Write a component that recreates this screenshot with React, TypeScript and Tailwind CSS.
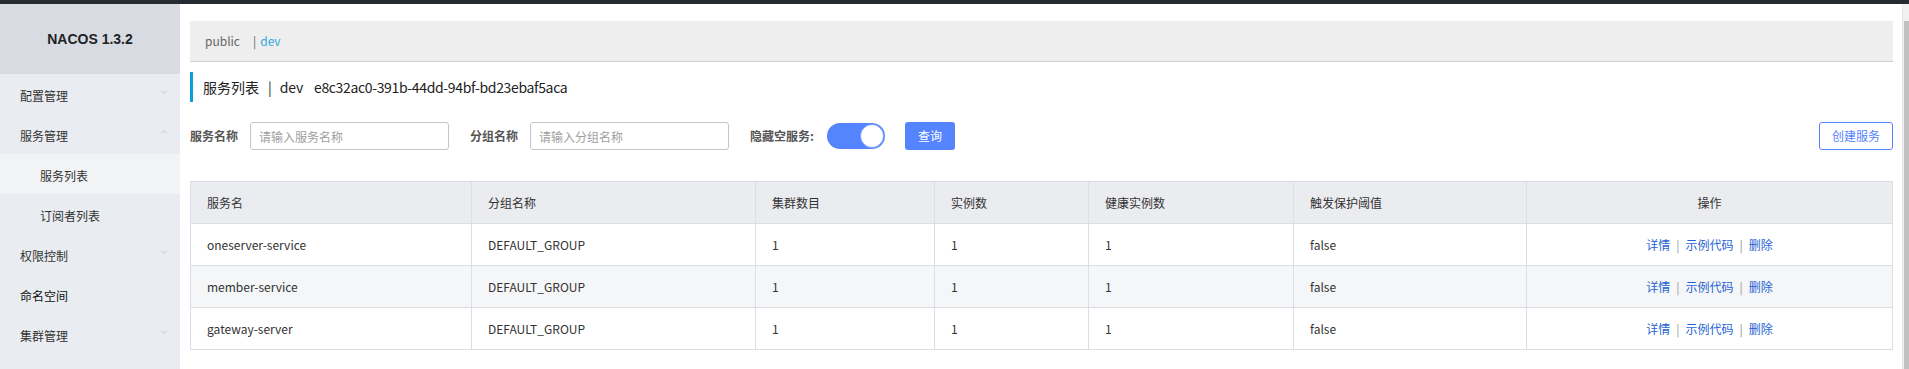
import { ChevronDown, ChevronUp } from 'lucide-react'

const MENU = [
  { label: '配置管理', arrow: 'down' },
  { label: '服务管理', arrow: 'up' },
  { label: '服务列表', sub: true, active: true },
  { label: '订阅者列表', sub: true },
  { label: '权限控制', arrow: 'down' },
  { label: '命名空间', strong: true },
  { label: '集群管理', arrow: 'down' },
]

const COLUMNS = [
  { title: '服务名', width: 'w-[281px]' },
  { title: '分组名称', width: 'w-[284px]' },
  { title: '集群数目', width: 'w-[179px]' },
  { title: '实例数', width: 'w-[154px]' },
  { title: '健康实例数', width: 'w-[205px]' },
  { title: '触发保护阈值', width: 'w-[233px]' },
  { title: '操作', width: 'w-[366px]', center: true },
]

const ROWS = ['oneserver-service', 'member-service', 'gateway-server']

export default function App() {
  return (
    <div className="w-[1909px] h-[369px] overflow-hidden flex flex-col bg-white text-[#333] font-['Noto_Sans_CJK_SC','Noto_Sans',sans-serif]">
      <div className="h-[4px] bg-[#262a31] shrink-0" />
      <div className="flex flex-1 min-h-0">
        <Sidebar />

        <main className="flex-1 pl-[10px] pr-[9px]">
          {/* namespace switcher */}
          <div className="mt-[17px] h-[41px] bg-[#eeeeee] border-b border-[#cfcfcf] flex items-center pl-[15px] text-[12px]">
            <span className="text-[#666]">public</span>
            <span className="ml-[13px] text-[#666]">|</span>
            <span className="ml-[4px] text-[#33a9e0]">dev</span>
          </div>

          {/* title */}
          <div className="mt-[10px] h-[30px] border-l-[3px] border-[#0d9fd8] flex items-center pl-[10px] text-[14px] text-[#222]">
            <span>服务列表</span>
            <span className="ml-[9px] mr-[8px]">|</span>
            <span className="tracking-[-0.2px]">dev</span>
            <span className="ml-[11px] tracking-[-0.35px]">e8c32ac0-391b-44dd-94bf-bd23ebaf5aca</span>
          </div>

          {/* filters */}
          <div className="mt-[20px] h-[28px] flex items-center text-[12px]">
            <span className="font-bold text-[#555]">服务名称</span>
            <input
              placeholder="请输入服务名称"
              className="ml-[12px] w-[199px] h-[28px] border border-[#c4c6cf] rounded-[3px] px-[8px] text-[12px] placeholder:text-[#a0a0a0] outline-none"
            />
            <span className="ml-[21px] font-bold text-[#555]">分组名称</span>
            <input
              placeholder="请输入分组名称"
              className="ml-[12px] w-[199px] h-[28px] border border-[#c4c6cf] rounded-[3px] px-[8px] text-[12px] placeholder:text-[#a0a0a0] outline-none"
            />
            <span className="ml-[21px] font-bold text-[#555]">隐藏空服务:</span>
            <div className="ml-[13px] w-[58px] h-[26px] rounded-full bg-[#5584ff] flex items-center justify-end pr-[1px]">
              <div className="w-[24px] h-[24px] rounded-full bg-white border border-[#7ea0ff]" />
            </div>
            <button className="ml-[20px] w-[50px] h-[28px] rounded-[3px] bg-[#5584ff] text-white text-[12px]">
              查询
            </button>
            <div className="flex-1" />
            <button className="w-[74px] h-[28px] rounded-[3px] border border-[#5584ff] bg-white text-[#5584ff] text-[12px]">
              创建服务
            </button>
          </div>

          {/* table */}
          <table className="mt-[31px] w-[1702px] table-fixed border-collapse text-[12px]">
            <thead>
              <tr className="h-[42px] bg-[#ebecf0]">
                {COLUMNS.map((c) => (
                  <th
                    key={c.title}
                    className={`${c.width} border border-[#dcdee3] font-normal px-[16px] ${c.center ? 'text-center' : 'text-left'}`}
                  >
                    {c.title}
                  </th>
                ))}
              </tr>
            </thead>
            <tbody>
              {ROWS.map((name, i) => (
                <tr key={name} className={`h-[42px] ${i === 1 ? 'bg-[#f5f6f7]' : 'bg-white'}`}>
                  <td className="border border-[#dcdee3] px-[16px]">{name}</td>
                  <td className="border border-[#dcdee3] px-[16px]">DEFAULT_GROUP</td>
                  <td className="border border-[#dcdee3] px-[16px]">1</td>
                  <td className="border border-[#dcdee3] px-[16px]">1</td>
                  <td className="border border-[#dcdee3] px-[16px]">1</td>
                  <td className="border border-[#dcdee3] px-[16px]">false</td>
                  <td className="border border-[#dcdee3] px-[16px] text-center">
                    <a className="text-[#1f63d3]">详情</a>
                    <span className="mx-[6px] text-[#999]">|</span>
                    <a className="text-[#1f63d3]">示例代码</a>
                    <span className="mx-[6px] text-[#999]">|</span>
                    <a className="text-[#1f63d3]">删除</a>
                  </td>
                </tr>
              ))}
            </tbody>
          </table>
        </main>

        {/* scrollbar */}
        <div className="w-[8px] bg-[#f1f1f1] border-l border-[#e6e6e6] flex flex-col">
          <div className="h-[17px]" />
          <div className="flex-1 bg-[#c1c1c1] ml-[1px]" />
        </div>
      </div>
    </div>
  )
}

function Sidebar() {
  return (
    <aside className="w-[180px] bg-[#e9ecf0] flex flex-col shrink-0">
      <div className="h-[70px] bg-[#d8dce2] flex items-center justify-center text-[14px] font-bold text-[#222] font-['Liberation_Sans','Noto_Sans_CJK_SC',sans-serif]">
        NACOS 1.3.2
      </div>
      {MENU.map((m) => (
        <div
          key={m.label}
          className={`h-[40px] flex items-center pt-[3px] text-[12px] ${m.sub ? 'pl-[40px]' : 'pl-[20px]'} pr-[11px] ${m.active ? 'bg-[#f2f3f5]' : ''} ${m.strong ? 'text-[#111]' : 'text-[#333]'}`}
        >
          <span className="flex-1">{m.label}</span>
          {m.arrow === 'down' && <ChevronDown size={10} strokeWidth={1} className="text-[#999] -mt-[8px]" />}
          {m.arrow === 'up' && <ChevronUp size={10} strokeWidth={1} className="text-[#999] -mt-[8px]" />}
        </div>
      ))}
    </aside>
  )
}
